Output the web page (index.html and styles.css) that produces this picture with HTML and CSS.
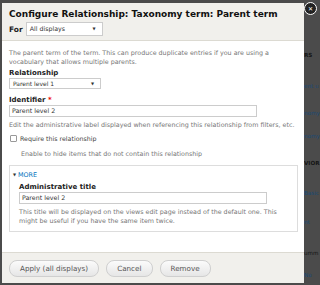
FILE: index.html
```html
<!DOCTYPE html>
<html lang="en">
<head>
  <meta charset="UTF-8">
  <title>Configure Relationship</title>
  <link rel="stylesheet" href="styles.css">
</head>
<body>
  <div class="page">
    <div class="dialog">
      <div class="dialog-header">
        <h1>Configure Relationship: Taxonomy term: Parent term</h1>
        <div class="for-row">
          <span class="for-label">For</span>
          <div class="select wide">All displays<span class="arrow">&#9660;</span></div>
        </div>
      </div>

      <div class="dialog-body">
        <p class="desc">The parent term of the term. This can produce duplicate entries if you are using a vocabulary that allows multiple parents.</p>

        <label class="field-label first">Relationship</label>
        <div class="select">Parent level 1<span class="arrow">&#9660;</span></div>

        <label class="field-label">Identifier <span class="req">*</span></label>
        <div class="text-input">Parent level 2</div>
        <p class="desc after-input">Edit the administrative label displayed when referencing this relationship from filters, etc.</p>

        <div class="check-row">
          <span class="checkbox"></span>
          <span class="check-label">Require this relationship</span>
        </div>
        <p class="desc indent">Enable to hide items that do not contain this relationship</p>

        <div class="fieldset">
          <div class="legend"><span class="tri">&#9660;</span>MORE</div>
          <div class="fieldset-inner">
            <label class="field-label">Administrative title</label>
            <div class="text-input">Parent level 2</div>
            <p class="desc after-input">This title will be displayed on the views edit page instead of the default one. This might be useful if you have the same item twice.</p>
          </div>
        </div>
      </div>

      <div class="dialog-footer">
        <span class="button">Apply (all displays)</span>
        <span class="button">Cancel</span>
        <span class="button">Remove</span>
      </div>
      <span class="close">&#10005;</span>
    </div>

    <div class="behind">
      <div class="b1 strong">RS</div>
      <div class="b2 link">ent u</div>
      <div class="b3 link">nomy</div>
      <div class="b4 link">nomy</div>
      <div class="b5 strong">VIOR</div>
      <div class="b6 link">Basic</div>
      <div class="b7 link">nt</div>
      <div class="b8">umm</div>
      <div class="b9 link">No</div>
    </div>
  </div>
</body>
</html>
```

FILE: styles.css
```css
body {
  margin: 0;
  background: #4b4b4b;
  font-family: "DejaVu Sans", Verdana, sans-serif;
  color: #333;
  overflow: hidden;
}
.page {
  display: flex;
  height: 285px;
}
.dialog {
  position: relative;
  width: 302px;
  flex: none;
  margin: 3px 0 0 2px;
  height: 280px;
  background: #fff;
  display: flex;
  flex-direction: column;
}
.dialog-header {
  background: #f1f0ec;
  border-bottom: 1px solid #dcdad2;
  padding: 6px 7px 0;
  height: 31px;
}
h1 {
  margin: 0;
  font-size: 9px;
  font-weight: bold;
  color: #111;
  line-height: 10px;
}
.for-row {
  display: flex;
  align-items: center;
  margin-top: 3px;
}
.for-label {
  font-weight: bold;
  font-size: 7.5px;
  color: #222;
  margin-right: 3px;
}
.select {
  position: relative;
  box-sizing: border-box;
  width: 92px;
  height: 11px;
  border: 1px solid #ccc;
  background: #fff;
  font-size: 6px;
  line-height: 9px;
  padding-left: 3px;
  color: #333;
}
.select.wide {
  width: 77px;
  height: 14px;
  line-height: 12px;
  font-size: 6.3px;
}
.arrow {
  position: absolute;
  right: 6px;
  top: 0;
  font-size: 4px;
}
.dialog-body {
  flex: 1;
  padding: 7px 7px 0;
}
.desc {
  margin: 0;
  font-size: 6.35px;
  line-height: 9px;
  color: #777;
}
.field-label {
  display: block;
  font-weight: bold;
  font-size: 7px;
  line-height: 9px;
  color: #222;
  margin-top: 7px;
  margin-bottom: 0;
}
.field-label.first {
  margin-top: 3px;
}
.req { color: #e00; }
.text-input {
  box-sizing: border-box;
  width: 248px;
  height: 12px;
  border: 1px solid #ccc;
  font-size: 6.3px;
  line-height: 10px;
  padding-left: 2px;
  color: #333;
}
.desc.after-input {
  margin-top: 3px;
}
.check-row {
  display: flex;
  align-items: center;
  margin-top: 5px;
}
.checkbox {
  width: 5px;
  height: 5px;
  border: 1px solid #999;
  border-radius: 1px;
  margin: 0 3px 0 1px;
}
.check-label {
  font-size: 6.3px;
  color: #444;
  line-height: 9px;
}
.desc.indent {
  margin-left: 12px;
  margin-top: 6px;
}
.fieldset {
  margin-top: 7px;
  border: 1px solid #ddd;
  width: 289px;
  height: 67px;
  box-sizing: border-box;
  padding: 4px 0 0 3px;
}
.legend {
  font-size: 6.4px;
  color: #0074bd;
  line-height: 9px;
}
.tri {
  font-size: 4px;
  color: #333;
  margin-right: 2px;
  vertical-align: 1px;
}
.fieldset-inner {
  padding-left: 6px;
}
.fieldset-inner .field-label {
  margin-top: 3px;
}
.dialog-footer {
  background: #f1f0ec;
  border-top: 1px solid #dcdad2;
  height: 30px;
  display: flex;
  align-items: center;
  gap: 7px;
  padding-left: 7px;
}
.button {
  font-size: 7.2px;
  color: #555;
  border: 1px solid #cfcfcf;
  border-radius: 8px;
  background: linear-gradient(#fbfbfb, #e6e6e6);
  padding: 3px 10px;
  line-height: 9px;
}
.close {
  position: absolute;
  right: -13px;
  top: -1px;
  width: 11px;
  height: 11px;
  border-radius: 50%;
  background: #222;
  border: 1px solid #fff;
  color: #fff;
  font-size: 6px;
  line-height: 11px;
  text-align: center;
  font-weight: bold;
}
.behind {
  flex: 1;
  font-size: 5.6px;
  color: #141414;
  line-height: 8px;
  padding-top: 51px;
}
.behind .link { color: #1a4a75; }
.behind .strong { font-weight: bold; }
.b2 { margin-top: 23px; }
.b3 { margin-top: 19px; }
.b4 { margin-top: 15px; }
.b5 { margin-top: 19px; }
.b6 { margin-top: 22px; }
.b7 { margin-top: 21px; }
.b8 { margin-top: 23px; }
.b9 { margin-top: 14px; }
```
